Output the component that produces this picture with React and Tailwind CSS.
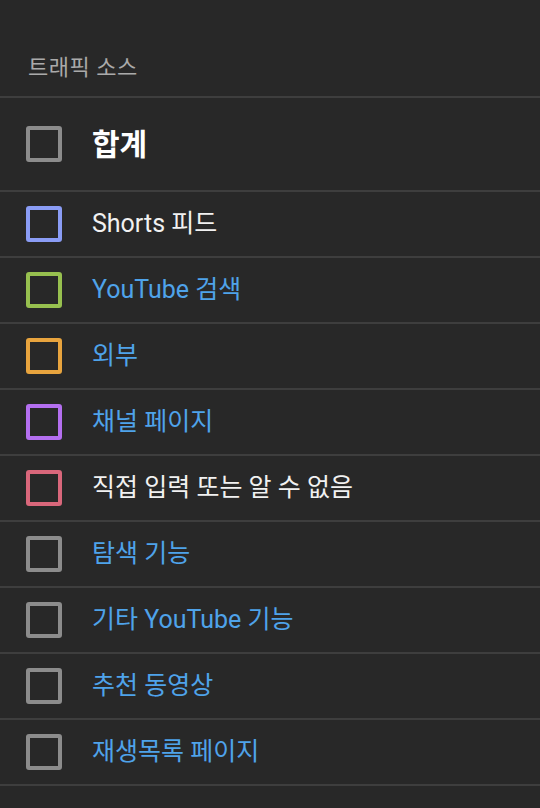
import React from 'react'

const rows = [
  { label: 'Shorts 피드', color: 'border-[#8a9cf5]', link: false },
  { label: 'YouTube 검색', color: 'border-[#97c04f]', link: true },
  { label: '외부', color: 'border-[#e8a43e]', link: true },
  { label: '채널 페이지', color: 'border-[#b46ff0]', link: true },
  { label: '직접 입력 또는 알 수 없음', color: 'border-[#d9677b]', link: false },
  { label: '탐색 기능', color: 'border-[#8c8c8c]', link: true },
  { label: '기타 YouTube 기능', color: 'border-[#8c8c8c]', link: true },
  { label: '추천 동영상', color: 'border-[#8c8c8c]', link: true },
  { label: '재생목록 페이지', color: 'border-[#8c8c8c]', link: true },
]

const Box = ({ color }) => (
  <div className={`w-9 h-9 shrink-0 rounded-[3px] border-4 ${color}`}></div>
)

export default function App() {
  return (
    <div
      className="w-[540px] h-[808px] bg-[#282828] overflow-hidden"
      style={{ fontFamily: 'Roboto, "Noto Sans CJK KR", sans-serif' }}
    >
      <div className="h-[98px] flex items-end px-7 pb-[14px] border-b-2 border-[#3e3e3e]">
        <span className="text-[22px] leading-7 tracking-[0.5px] text-[#aaaaaa]">트래픽 소스</span>
      </div>

      <div className="h-[94px] flex items-center px-[26px] gap-[30px] border-b-2 border-[#3e3e3e]">
        <Box color="border-[#8c8c8c]" />
        <span className="text-[30px] font-bold text-white">합계</span>
      </div>

      {rows.map((r) => (
        <div
          key={r.label}
          className="h-[66px] flex items-center px-[26px] gap-[30px] border-b-2 border-[#3e3e3e]"
        >
          <Box color={r.color} />
          <span className={`text-[25px] ${r.link ? 'text-[#4fa3ea]' : 'text-[#f1f1f1]'}`}>
            {r.label}
          </span>
        </div>
      ))}
    </div>
  )
}
